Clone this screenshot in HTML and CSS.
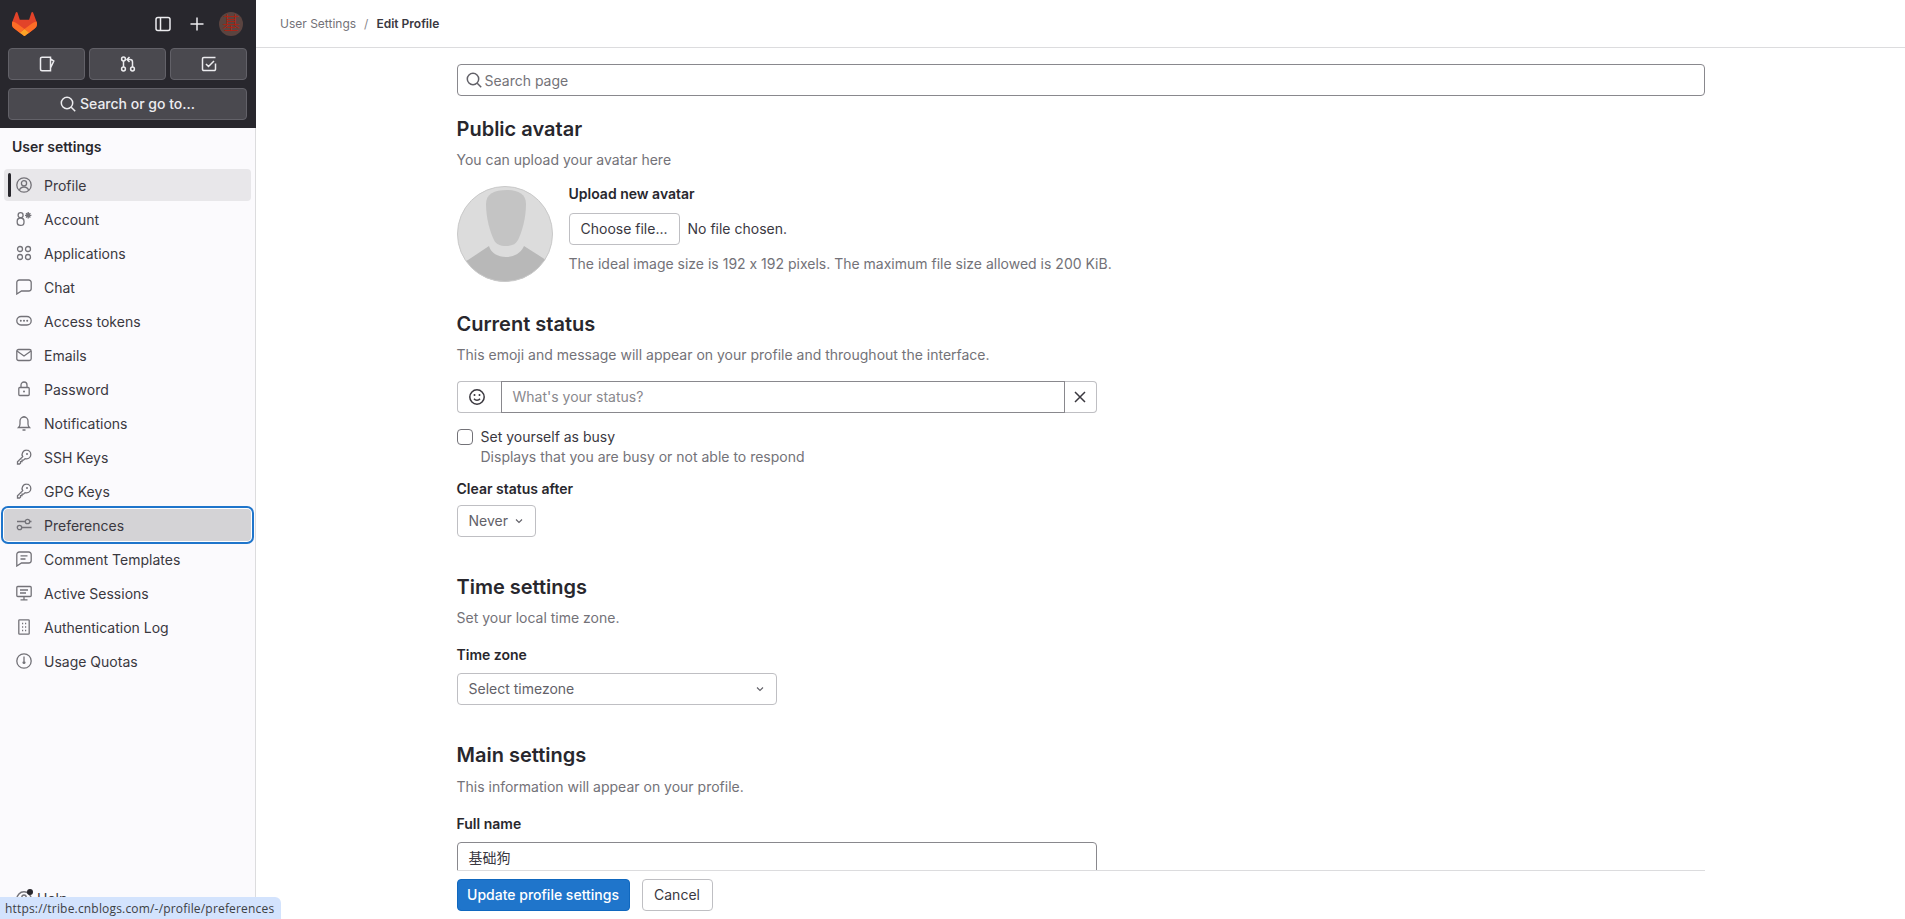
FILE: index.html
```html
<!DOCTYPE html>
<html lang="en">

<head>
  <meta charset="UTF-8">
  <title>Edit Profile</title>
  <link rel="stylesheet" href="styles.css">
</head>

<body>
  <!-- icon sprite -->
  <svg class="sprite" xmlns="http://www.w3.org/2000/svg">
    <symbol id="i-profile" viewBox="0 0 16 16"><circle cx="8" cy="8" r="7.2"/><circle cx="8" cy="6.2" r="2.6"/><path d="M3.4 13.2c.8-2.2 2.5-3.2 4.6-3.2s3.8 1 4.6 3.2"/></symbol>
    <symbol id="i-account" viewBox="0 0 16 16"><circle cx="4.6" cy="4.2" r="2.5"/><rect x="1.2" y="7" width="6.8" height="7.400" rx="3.200"/><circle class="solid" cx="12.200" cy="4.300" r="2"/><path d="M12.200 1v6.600M9 4.300h6.400M10 2.100l4.400 4.400M14.400 2.100L10 6.500"/></symbol>
    <symbol id="i-apps" viewBox="0 0 16 16"><circle cx="4" cy="4" r="2.500"/><circle cx="12" cy="4" r="2.500"/><circle cx="4" cy="12" r="2.500"/><circle cx="12" cy="12" r="2.500"/></symbol>
    <symbol id="i-chat" viewBox="0 0 16 16"><path d="M.8 15V3.500A2.500 2.500 0 0 1 3.300 1h9.400a2.500 2.500 0 0 1 2.500 2.500v6a2.500 2.500 0 0 1-2.500 2.500H5.500z"/></symbol>
    <symbol id="i-token" viewBox="0 0 16 16"><rect x=".8" y="3.500" width="14.400" height="8.500" rx="4.250"/><path class="thick" d="M4.800 7.750h.01M8 7.750h.01M11.200 7.750h.01"/></symbol>
    <symbol id="i-mail" viewBox="0 0 16 16"><rect x=".8" y="2.500" width="14.400" height="11" rx="1.800"/><path d="M1 4l7 5 7-5"/></symbol>
    <symbol id="i-lock" viewBox="0 0 16 16"><rect x="2.800" y="6.500" width="10.400" height="8" rx="1"/><path d="M5 6.500V4a3 3 0 0 1 6 0v2.500"/><path class="thick" d="M8 10.500h.01"/></symbol>
    <symbol id="i-bell" viewBox="0 0 16 16"><path d="M2.500 12.500c1-1 1.500-2 1.500-3.500V6a4 4 0 0 1 8 0v3c0 1.500.5 2.500 1.500 3.500z"/><path d="M6.500 15h3M8 1v1"/></symbol>
    <symbol id="i-key" viewBox="0 0 16 16"><path d="M10.500 1.200a4.300 4.300 0 0 1 0 8.600c-.5 0-1-.1-1.400-.2L7.500 11.200H6v1.500H4.500v1.500l-1 .8H1.500v-2.300l5.200-5a4.300 4.300 0 0 1 3.800-6.500z"/><path class="thick" d="M11 5h.01"/></symbol>
    <symbol id="i-pref" viewBox="0 0 16 16"><circle cx="11.500" cy="4.500" r="2.200"/><circle cx="3.500" cy="10.500" r="2.200"/><path d="M1 4.500h8M14 4.500h1.500M6 10.500h9.500"/></symbol>
    <symbol id="i-comment" viewBox="0 0 16 16"><path d="M.8 15V3.500A2.500 2.500 0 0 1 3.300 1h9.400a2.500 2.500 0 0 1 2.500 2.500v6a2.500 2.500 0 0 1-2.500 2.500H5.500z"/><path d="M4.500 4.800h7M4.500 8h5"/></symbol>
    <symbol id="i-monitor" viewBox="0 0 16 16"><rect x=".8" y="1.500" width="14.400" height="10" rx="1"/><path d="M4 5h8M4 8h6M8 11.500v3M4.500 14.800h7"/></symbol>
    <symbol id="i-log" viewBox="0 0 16 16"><rect x="2.800" y=".8" width="10.400" height="14.400" rx=".8"/><path d="M6 4.500h1.200M9 4.500h1.200M6 8h1.200M9 8h1.200M6 11.500h1.200M9 11.500h1.200"/></symbol>
    <symbol id="i-quota" viewBox="0 0 16 16"><circle cx="8" cy="8" r="7.200"/><path d="M8 3.500V8"/><circle class="solid" cx="8" cy="9.500" r="1.500"/></symbol>
    <symbol id="i-search" viewBox="0 0 16 16"><circle cx="7" cy="7" r="5.700"/><path d="M11.200 11.200l4 4"/></symbol>
    <symbol id="i-panel" viewBox="0 0 16 16"><rect x="1" y="1.500" width="14" height="13" rx="2"/><path d="M5.500 1.500v13"/></symbol>
    <symbol id="i-plus" viewBox="0 0 16 16"><path d="M8 1.500v13M1.500 8h13"/></symbol>
    <symbol id="i-issue" viewBox="0 0 16 16"><path d="M11.500 14.800H3a1.500 1.500 0 0 1-1.500-1.500V2.700A1.500 1.500 0 0 1 3 1.200h8.500zM11.500 3l3.300 2-3.300 7"/></symbol>
    <symbol id="i-mr" viewBox="0 0 16 16"><circle cx="3.500" cy="3" r="1.900"/><circle cx="3.500" cy="13" r="1.900"/><circle cx="12.500" cy="13" r="1.900"/><path d="M3.500 5v6M12.500 11V6a2.500 2.500 0 0 0-2.500-2.500H7.500M9.500 1L7 3.500 9.500 6"/></symbol>
    <symbol id="i-todo" viewBox="0 0 16 16"><path d="M14.500 7.500v5.700a1.300 1.300 0 0 1-1.300 1.300H2.800a1.300 1.300 0 0 1-1.300-1.300V2.800a1.300 1.300 0 0 1 1.300-1.300h11.700M5 8l2.500 2.500L13 5"/></symbol>
    <symbol id="i-smile" viewBox="0 0 16 16"><circle cx="8" cy="8" r="7.200"/><path d="M5 9.800c.7 1 1.700 1.500 3 1.500s2.300-.5 3-1.500"/><path class="thick" d="M5.500 6h.01M10.500 6h.01"/></symbol>
    <symbol id="i-close" viewBox="0 0 16 16"><path d="M3 3l10 10M13 3L3 13"/></symbol>
    <symbol id="i-chevron" viewBox="0 0 16 16"><path d="M4 6l4 4 4-4"/></symbol>
    <symbol id="i-help" viewBox="0 0 16 16"><circle cx="8" cy="8" r="7.200"/><path d="M5.800 6a2.200 2.200 0 1 1 3.400 2c-.8.500-1.200 1-1.200 2"/></symbol>
  </svg>

  <div class="page">
    <aside class="sidebar">
      <div class="topbar">
        <div class="topbar__row">
          <svg class="logo" viewBox="0 0 25 24" xmlns="http://www.w3.org/2000/svg">
            <path fill="#E24329" d="m24.507 9.5-.034-.09L21.082.562a.896.896 0 0 0-1.694.091l-2.29 7.01H7.825L5.535.653a.898.898 0 0 0-1.694-.09L.451 9.411.416 9.5a6.297 6.297 0 0 0 2.09 7.278l.012.01.03.022 5.16 3.867 2.56 1.935 1.554 1.176a1.051 1.051 0 0 0 1.268 0l1.555-1.176 2.56-1.935 5.197-3.89.014-.01A6.297 6.297 0 0 0 24.507 9.5Z"/>
            <path fill="#FC6D26" d="M24.507 9.5l-.034-.09a11.44 11.44 0 0 0-4.56 2.051l-7.447 5.632 4.742 3.584 5.197-3.89.014-.01A6.297 6.297 0 0 0 24.507 9.5Z"/>
            <path fill="#FCA326" d="m7.707 20.677 2.56 1.935 1.555 1.176a1.051 1.051 0 0 0 1.268 0l1.555-1.176 2.56-1.935-4.743-3.584-4.755 3.584Z"/>
            <path fill="#FC6D26" d="M5.010 11.461a11.430 11.430 0 0 0-4.560-2.050L.416 9.500a6.297 6.297 0 0 0 2.090 7.278l.012.010.030.022 5.160 3.867 4.745-3.584-7.444-5.632Z"/>
          </svg>
          <svg class="icon topbar__panel"><use href="#i-panel"/></svg>
          <svg class="icon topbar__plus"><use href="#i-plus"/></svg>
          <span class="topbar__avatar">基</span>
        </div>
        <div class="topbar__counts">
          <div class="dark-btn"><svg class="icon"><use href="#i-issue"/></svg></div>
          <div class="dark-btn"><svg class="icon"><use href="#i-mr"/></svg></div>
          <div class="dark-btn"><svg class="icon"><use href="#i-todo"/></svg></div>
        </div>
        <div class="dark-btn dark-btn_search"><svg class="icon"><use href="#i-search"/></svg>Search or go to...</div>
      </div>

      <div class="sidebar__title">User settings</div>
      <nav class="nav">
        <a class="nav__item nav__item_current"><svg class="icon"><use href="#i-profile"/></svg>Profile</a>
        <a class="nav__item"><svg class="icon"><use href="#i-account"/></svg>Account</a>
        <a class="nav__item"><svg class="icon"><use href="#i-apps"/></svg>Applications</a>
        <a class="nav__item"><svg class="icon"><use href="#i-chat"/></svg>Chat</a>
        <a class="nav__item"><svg class="icon"><use href="#i-token"/></svg>Access tokens</a>
        <a class="nav__item"><svg class="icon"><use href="#i-mail"/></svg>Emails</a>
        <a class="nav__item"><svg class="icon"><use href="#i-lock"/></svg>Password</a>
        <a class="nav__item"><svg class="icon"><use href="#i-bell"/></svg>Notifications</a>
        <a class="nav__item"><svg class="icon"><use href="#i-key"/></svg>SSH Keys</a>
        <a class="nav__item"><svg class="icon"><use href="#i-key"/></svg>GPG Keys</a>
        <a class="nav__item nav__item_focus"><svg class="icon"><use href="#i-pref"/></svg>Preferences</a>
        <a class="nav__item"><svg class="icon"><use href="#i-comment"/></svg>Comment Templates</a>
        <a class="nav__item"><svg class="icon"><use href="#i-monitor"/></svg>Active Sessions</a>
        <a class="nav__item"><svg class="icon"><use href="#i-log"/></svg>Authentication Log</a>
        <a class="nav__item"><svg class="icon"><use href="#i-quota"/></svg>Usage Quotas</a>
      </nav>
      <div class="sidebar__help"><svg class="icon"><use href="#i-help"/></svg><span class="sidebar__help-dot"></span>Help</div>
    </aside>

    <main class="main">
      <div class="crumbs">
        <span class="crumbs__link">User Settings</span>
        <span class="crumbs__sep">/</span>
        <span class="crumbs__current">Edit Profile</span>
      </div>

      <div class="content">
        <div class="page-search"><svg class="icon"><use href="#i-search"/></svg>Search page</div>

        <section class="block block_avatar">
          <h2 class="block__title">Public avatar</h2>
          <p class="block__desc">You can upload your avatar here</p>
          <div class="avatar-row">
            <svg class="avatar" viewBox="0 0 96 96" xmlns="http://www.w3.org/2000/svg">
              <defs><clipPath id="avatar-clip"><circle cx="48" cy="48" r="47.500"/></clipPath></defs>
              <circle cx="48" cy="48" r="47.500" fill="#dcdcdc"/>
              <g clip-path="url(#avatar-clip)">
                <path fill="#c4c4c4" d="M50 4c11 0 19 4 19 14 0 14-4 28-8 36-2 4-6 6-12 6s-10-2-12-6c-4-8-8-22-8-36 0-10 8-14 21-14z"/>
                <path fill="#b8b8b8" d="M32 60c2 7 9 11 17 11s15-4 18-11l22 14c3 2 5 6 5 10v12H3V84c0-4 3-8 8-10z"/>
              </g>
              <circle cx="48" cy="48" r="47.500" fill="none" stroke="#c9c9c9"/>
            </svg>
            <div class="avatar-row__body">
              <div class="label">Upload new avatar</div>
              <div class="file-row">
                <span class="btn btn_file">Choose file...</span>
                <span>No file chosen.</span>
              </div>
              <p class="hint">The ideal image size is 192 x 192 pixels. The maximum file size allowed is 200 KiB.</p>
            </div>
          </div>
        </section>

        <section class="block block_status">
          <h2 class="block__title">Current status</h2>
          <p class="block__desc">This emoji and message will appear on your profile and throughout the interface.</p>
          <div class="status-input">
            <span class="status-input__side status-input__side_emoji"><svg class="icon"><use href="#i-smile"/></svg></span>
            <span class="status-input__field">What's your status?</span>
            <span class="status-input__side status-input__side_clear"><svg class="icon"><use href="#i-close"/></svg></span>
          </div>
          <div class="check">
            <span class="check__box"></span>
            <div>
              <div class="check__label">Set yourself as busy</div>
              <div class="hint">Displays that you are busy or not able to respond</div>
            </div>
          </div>
          <div class="label label_after">Clear status after</div>
          <div class="btn btn_select btn_never">Never <svg class="icon"><use href="#i-chevron"/></svg></div>
        </section>

        <section class="block block_time">
          <h2 class="block__title">Time settings</h2>
          <p class="block__desc">Set your local time zone.</p>
          <div class="label label_zone">Time zone</div>
          <div class="btn btn_select btn_zone">Select timezone <svg class="icon"><use href="#i-chevron"/></svg></div>
        </section>

        <section class="block block_main">
          <h2 class="block__title">Main settings</h2>
          <p class="block__desc">This information will appear on your profile.</p>
          <div class="label label_zone">Full name</div>
          <div class="name-input">基础狗</div>
        </section>
      </div>

      <div class="actions">
        <div class="actions__inner">
          <span class="btn btn_primary">Update profile settings</span>
          <span class="btn btn_cancel">Cancel</span>
        </div>
      </div>
    </main>
  </div>

  <div class="status-url">https://tribe.cnblogs.com/-/profile/preferences</div>
</body>

</html>
```

FILE: styles.css
```css
* {
  box-sizing: border-box;
}

html,
body {
  height: 100%;
  margin: 0;
  overflow: hidden;
}

body {
  font-family: Inter, "Noto Sans CJK SC", sans-serif;
  font-size: 14px;
  font-feature-settings: "calt" 0;
  line-height: 20px;
  color: #3a383f;
  background: #fff;
}

.sprite {
  display: none;
}

.icon {
  width: 16px;
  height: 16px;
  flex: none;
  fill: none;
  stroke: currentColor;
  stroke-width: 1.5;
}

.thick {
  stroke-width: 2;
  stroke-linecap: round;
}

.solid {
  fill: currentColor;
  stroke: none;
}

.page {
  display: flex;
  height: 100%;
}

/* sidebar */
.sidebar {
  position: relative;
  flex: none;
  width: 256px;
  background: #fbfafd;
  border-right: 1px solid #dcdcde;
}

.topbar {
  height: 128px;
  padding: 12px 8px 0;
  background: #28272d;
  color: #ececef;
  margin-right: -1px;
}

.topbar__row {
  display: flex;
  align-items: center;
  height: 24px;
  margin-bottom: 12px;
}

.logo {
  width: 25px;
  height: 24px;
  margin-left: 4px;
}

.topbar__panel {
  margin-left: 118px;
}

.topbar__plus {
  margin-left: 18px;
}

.topbar__avatar {
  display: flex;
  align-items: center;
  justify-content: center;
  width: 24px;
  height: 24px;
  margin-left: 14px;
  border-radius: 50%;
  background: #5b4440;
  color: #b0200f;
  font-size: 18px;
  font-weight: 300;
  overflow: hidden;
}

.topbar__counts {
  display: grid;
  grid-template-columns: repeat(3, 77px);
  gap: 4px;
  margin-bottom: 8px;
}

.dark-btn {
  display: flex;
  align-items: center;
  justify-content: center;
  height: 32px;
  background: #4a494f;
  border: 1px solid #626168;
  border-radius: 4px;
  color: #ececef;
}

.dark-btn_search {
  width: 239px;
  gap: 4px;
  font-weight: 500;
}

.sidebar__title {
  padding: 9px 12px 0;
  margin-bottom: 12px;
  font-weight: 600;
  color: #28272d;
}

.nav {
  display: flex;
  flex-direction: column;
  gap: 2px;
  padding: 0 4px;
}

.nav__item {
  position: relative;
  display: flex;
  align-items: center;
  gap: 12px;
  height: 32px;
  padding: 2px 0 0 12px;
  border-radius: 4px;
}

.nav__item .icon {
  margin-top: -2px;
  color: #737278;
  stroke-width: 1.3;
}

.nav__item_current {
  background: #e8e7ea;
}

.nav__item_current::before {
  content: "";
  position: absolute;
  left: 4px;
  top: 4px;
  bottom: 4px;
  width: 3px;
  border-radius: 2px;
  background: #28272d;
}

.nav__item_focus {
  background: #d4d3d6;
  box-shadow: 0 0 0 1px #fff, 0 0 0 3px #1f75cb;
}

.sidebar__help {
  position: absolute;
  left: 16px;
  bottom: 10px;
  display: flex;
  align-items: center;
  gap: 5px;
}

.sidebar__help .icon {
  color: #737278;
}

.sidebar__help-dot {
  position: absolute;
  left: 11px;
  top: 0;
  width: 6px;
  height: 6px;
  border-radius: 50%;
  background: #28272d;
}

/* main */
.main {
  position: relative;
  flex: 1;
  min-width: 0;
}

.crumbs {
  display: flex;
  align-items: center;
  gap: 8px;
  height: 48px;
  padding-left: 24px;
  border-bottom: 1px solid #dcdcde;
  font-size: 12px;
}

.crumbs__link {
  color: #737278;
}

.crumbs__sep {
  color: #89888d;
}

.crumbs__current {
  font-weight: 600;
  color: #3a383f;
}

.content {
  max-width: 1248px;
  margin: 0 auto;
  padding-top: 16px;
}

.page-search {
  display: flex;
  align-items: center;
  gap: 3px;
  height: 32px;
  padding: 2px 0 0 8px;
  border: 1px solid #89888d;
  border-radius: 4px;
  color: #737278;
}

.page-search .icon {
  margin-top: -2px;
  color: #626168;
}

.block__title {
  margin: 0 0 9px;
  font-size: 20px;
  line-height: 24px;
  font-weight: 600;
  color: #28272d;
}

.block__desc {
  margin: 0;
  color: #737278;
}

.block_avatar {
  margin-top: 21px;
}

.block_status {
  margin-top: 30px;
}

.block_time {
  margin-top: 38px;
}

.block_main {
  margin-top: 38px;
}

.block_main .block__title {
  margin-bottom: 10px;
}

.avatar-row {
  display: flex;
  gap: 16px;
  margin-top: 14px;
}

.avatar {
  flex: none;
  width: 96px;
  height: 96px;
  margin-top: 2px;
}

.label {
  font-weight: 600;
  color: #28272d;
}

.label_after {
  margin-top: 12px;
}

.label_zone {
  margin-top: 17px;
}

.file-row {
  display: flex;
  align-items: center;
  gap: 8px;
  margin-top: 9px;
  color: #3a383f;
}

.btn {
  display: inline-flex;
  align-items: center;
  justify-content: center;
  height: 32px;
  padding: 0 11px;
  background: #fff;
  border: 1px solid #bfbfc3;
  border-radius: 4px;
  color: #3a383f;
  white-space: nowrap;
}

.hint {
  margin: 0;
  color: #737278;
}

.avatar-row__body .hint {
  margin-top: 9px;
}

.status-input {
  display: flex;
  width: 640px;
  height: 32px;
  margin-top: 16px;
}

.status-input__side {
  display: flex;
  align-items: center;
  justify-content: center;
  border: 1px solid #bfbfc3;
}

.status-input__side_emoji {
  width: 44px;
  padding-right: 4px;
  border-right: 0;
  border-radius: 4px 0 0 4px;
}

.status-input__side_clear {
  width: 32px;
  border-left: 0;
  border-radius: 0 4px 4px 0;
}

.status-input__field {
  flex: 1;
  display: flex;
  align-items: center;
  padding-left: 11px;
  border: 1px solid #89888d;
  color: #89888d;
}

.check {
  display: flex;
  gap: 8px;
  margin-top: 14px;
}

.check__box {
  flex: none;
  width: 16px;
  height: 16px;
  margin-top: 2px;
  border: 1px solid #737278;
  border-radius: 4px;
}

.btn_select {
  justify-content: space-between;
  color: #626168;
  margin-top: 6px;
  padding-right: 10px;
}

.btn_select .icon {
  width: 12px;
  height: 12px;
}

.btn_never {
  display: flex;
  width: 79px;
}

.btn_zone {
  display: flex;
  width: 320px;
  margin-top: 8px;
}

.name-input {
  width: 640px;
  height: 40px;
  margin-top: 8px;
  padding: 5px 11px;
  border: 1px solid #89888d;
  border-radius: 4px;
  color: #3a383f;
}

/* sticky form footer */
.actions {
  position: absolute;
  left: 0;
  right: 0;
  bottom: 0;
  background: #fff;
}

.actions__inner {
  display: flex;
  gap: 12px;
  max-width: 1248px;
  height: 49px;
  margin: 0 auto;
  padding-top: 8px;
  border-top: 1px solid #dcdcde;
}

.btn_primary {
  width: 173px;
  padding: 0;
  background: #1f75cb;
  border-color: #1068bf;
  color: #fff;
  font-weight: 500;
}

.btn_cancel {
  width: 71px;
}

/* browser status bubble */
.status-url {
  position: fixed;
  left: 0;
  bottom: 0;
  width: 281px;
  height: 22px;
  padding-left: 5px;
  background: #d3e3fd;
  border-top-right-radius: 6px;
  font-family: "Open Sans", sans-serif;
  font-size: 12px;
  letter-spacing: .18px;
  line-height: 23px;
  color: #3c4043;
  white-space: nowrap;
}
```
